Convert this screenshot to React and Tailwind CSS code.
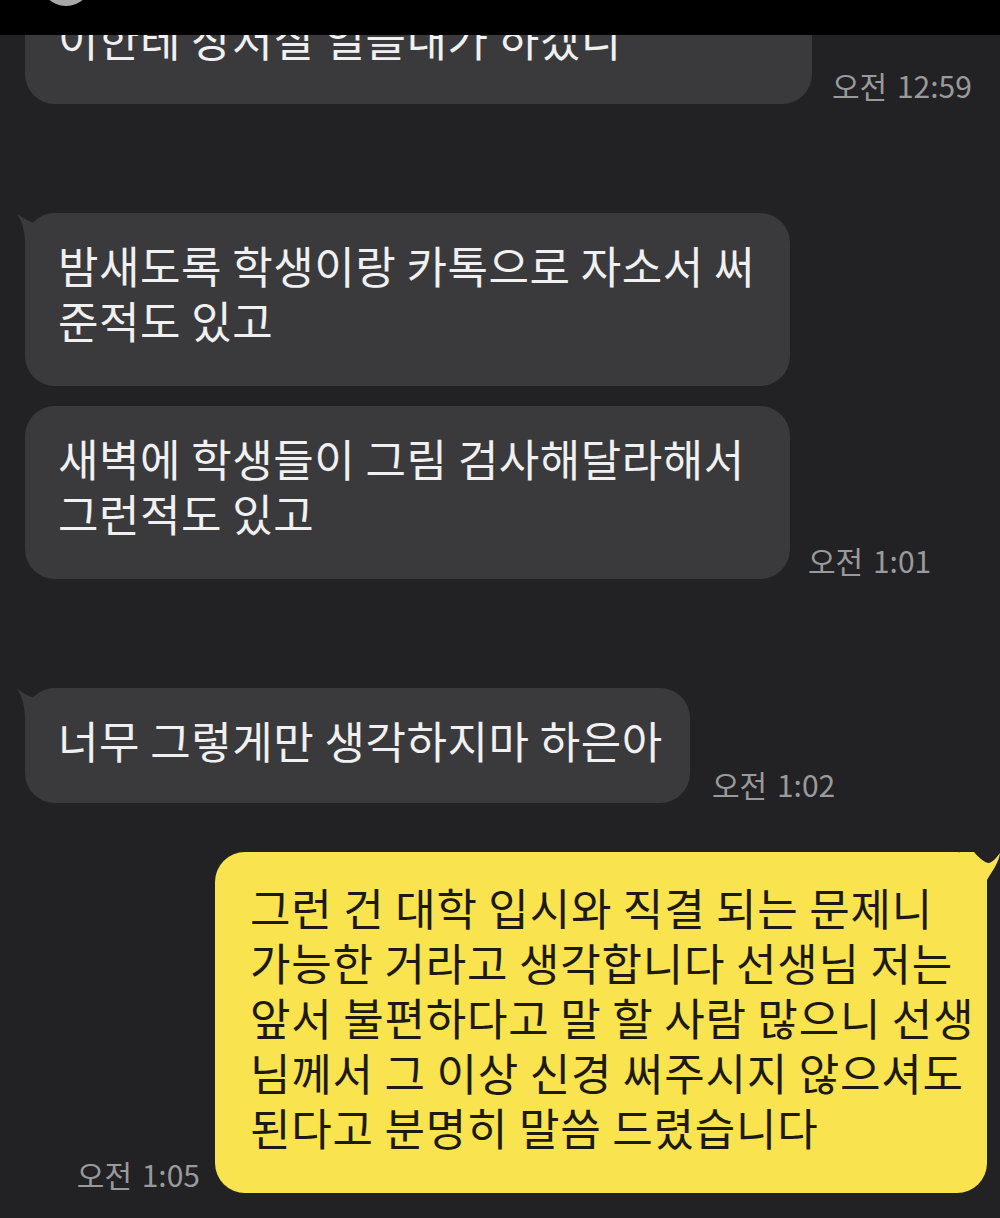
import React from "react";

const font = { fontFamily: '"Noto Sans CJK KR", "Noto Sans", sans-serif' };

function LeftTail() {
  return (
    <svg className="absolute -left-[9px] top-0" width="40" height="40" viewBox="0 0 40 40">
      <path d="M1 1 C10 7 16 10 21 10 C26 9 31 5 36 0 L40 0 L40 40 L9 40 L9 30 C9 18 6 8 1 1 Z" fill="#3a3a3c" />
    </svg>
  );
}

function RightTail() {
  return (
    <svg className="absolute -right-[13px] top-0" width="40" height="40" viewBox="0 0 40 40">
      <path d="M0 0 L14 0 C19 6 25 11 29 11 C33 10 37 5 40 1 C39 10 33 18 27 28 L27 40 L0 40 Z" fill="#f9e34e" />
    </svg>
  );
}

function Time({ children }) {
  return (
    <div className="text-[30px] leading-none text-[#9a9a9c] whitespace-nowrap pb-[4px] [word-spacing:3px]">
      {children}
    </div>
  );
}

function GrayBubble({ width, tail, short, children }) {
  return (
    <div
      className={
        "relative rounded-[30px] bg-[#3a3a3c] text-[#f0f0f0] text-[44px] leading-[55px] pl-[33px] pt-[25px] whitespace-nowrap tracking-[0.5px] " +
        (short ? "pb-[35px]" : "pb-[38px]")
      }
      style={{ width }}
    >
      {tail && <LeftTail />}
      {children}
    </div>
  );
}

export default function App() {
  return (
    <div className="w-[1000px] h-[1218px] bg-[#222124] overflow-hidden flex flex-col" style={font}>
      <div className="h-[35px] bg-black shrink-0 relative z-10">
        <div className="absolute left-[40px] -top-[46px] w-[52px] h-[52px] rounded-full bg-[#a8a8a8]"></div>
      </div>
      <div className="flex flex-col">
        {/* row 1 (clipped) */}
        <div className="flex items-end gap-[20px] pl-[25px] -mt-[104px]">
          <GrayBubble width="787px">
            <div>선생님이 학생들 다 챙기</div>
            <div>이한테 장저질 일을내가 하겠니</div>
          </GrayBubble>
          <Time>오전 12:59</Time>
        </div>

        {/* row 2 */}
        <div className="flex items-end pl-[25px] mt-[109px]">
          <GrayBubble width="765px" tail>
            <div>밤새도록 학생이랑 카톡으로 자소서 써</div>
            <div>준적도 있고</div>
          </GrayBubble>
        </div>

        {/* row 3 */}
        <div className="flex items-end gap-[18px] pl-[25px] mt-[20px]">
          <GrayBubble width="765px">
            <div>새벽에 학생들이 그림 검사해달라해서</div>
            <div>그런적도 있고</div>
          </GrayBubble>
          <Time>오전 1:01</Time>
        </div>

        {/* row 4 */}
        <div className="flex items-end gap-[22px] pl-[25px] mt-[109px]">
          <GrayBubble width="665px" tail short>
            <div>너무 그렇게만 생각하지마 하은아</div>
          </GrayBubble>
          <Time>오전 1:02</Time>
        </div>

        {/* row 5 */}
        <div className="flex items-end justify-end gap-[15px] pr-[13px] mt-[49px]">
          <Time>오전 1:05</Time>
          <div className="relative w-[772px] rounded-[30px] bg-[#f9e34e] text-[#1c1a12] text-[44px] leading-[55px] pl-[35px] pt-[28px] pb-[38px] whitespace-nowrap tracking-[0.8px]">
            <RightTail />
            <div>그런 건 대학 입시와 직결 되는 문제니</div>
            <div>가능한 거라고 생각합니다 선생님 저는</div>
            <div>앞서 불편하다고 말 할 사람 많으니 선생</div>
            <div>님께서 그 이상 신경 써주시지 않으셔도</div>
            <div>된다고 분명히 말씀 드렸습니다</div>
          </div>
        </div>
      </div>
    </div>
  );
}
